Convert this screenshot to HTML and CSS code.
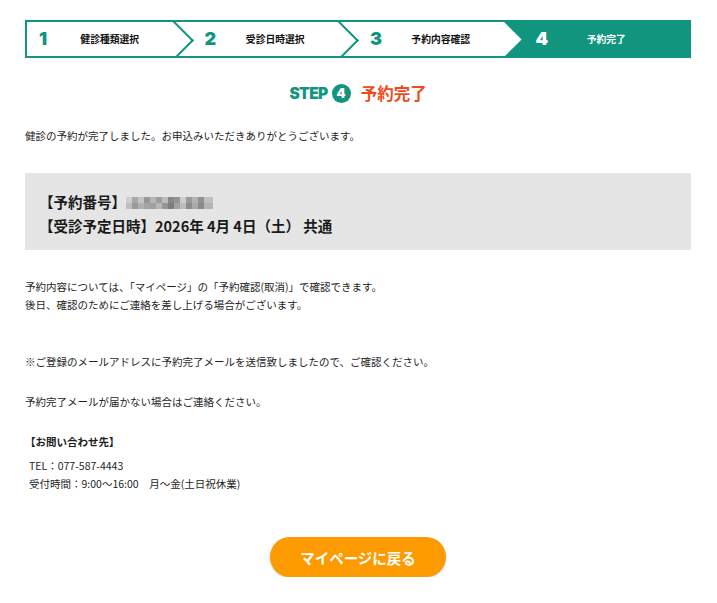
FILE: index.html
```html
<!DOCTYPE html>
<html lang="ja">
<head>
<meta charset="utf-8">
<title>予約完了</title>
<link rel="stylesheet" href="styles.css">
</head>
<body>
<div class="page">
  <ol class="steps">
    <li class="step"><span class="num">1</span><span class="label">健診種類選択</span></li>
    <li class="step"><span class="num">2</span><span class="label">受診日時選択</span></li>
    <li class="step before-current"><span class="num">3</span><span class="label">予約内容確認</span></li>
    <li class="step current"><span class="num">4</span><span class="label">予約完了</span></li>
  </ol>

  <h1 class="title"><span class="step-word">STEP</span><span class="step-badge">4</span><span class="title-text">予約完了</span></h1>

  <p class="lead">健診の予約が完了しました。お申込みいただきありがとうございます。</p>

  <div class="summary">
    <p>【予約番号】<span class="masked"></span></p>
    <p>【受診予定日時】2026年 4月 4日（土） 共通</p>
  </div>

  <p class="note first">予約内容については、「マイページ」の「予約確認(取消)」で確認できます。<br>後日、確認のためにご連絡を差し上げる場合がございます。</p>
  <p class="note mail">※ご登録のメールアドレスに予約完了メールを送信致しましたので、ご確認ください。</p>
  <p class="note">予約完了メールが届かない場合はご連絡ください。</p>

  <div class="contact">
    <p class="contact-title">【お問い合わせ先】</p>
    <p class="contact-line">TEL：077-587-4443</p>
    <p class="contact-line">受付時間：9:00〜16:00　月〜金(土日祝休業)</p>
  </div>

  <div class="actions"><a class="btn" href="#">マイページに戻る</a></div>
</div>
</body>
</html>
```

FILE: styles.css
```css
* { box-sizing: border-box; }

body {
  margin: 0;
  background: #fff;
  color: #1e1e1e;
  font-family: "Noto Sans CJK JP", "Noto Sans", sans-serif;
}

p { margin: 0; }

.page {
  width: 666px;
  margin: 0 auto 0 25px;
  padding-top: 20px;
}

/* step bar */
.steps {
  display: flex;
  list-style: none;
  margin: 0;
  padding: 0;
  height: 38px;
  border: 2px solid #11957f;
  overflow: hidden;
  position: relative;
}

.step {
  flex: 1;
  position: relative;
  display: grid;
  grid-template-columns: 1fr auto 1fr;
  align-items: center;
}

.step .num {
  grid-column: 1;
  justify-self: start;
  padding-left: 12px;
  font-family: Inter, "Open Sans", sans-serif;
  font-weight: 900;
  font-size: 18px;
  line-height: 1;
  color: #11957f;
}

.step .label {
  grid-column: 2;
  font-size: 9.8px;
  font-weight: 700;
  color: #111;
  white-space: nowrap;
}

.step::after {
  content: "";
  position: absolute;
  top: 50%;
  right: 5px;
  width: 27px;
  height: 27px;
  margin-top: -13.5px;
  border-top: 2px solid #11957f;
  border-right: 2px solid #11957f;
  transform: rotate(45deg);
  z-index: 2;
}

.step.before-current::after {
  border: 0;
  background: #fff;
  right: 8px;
}

.step.current {
  background: #11957f;
}

.step.current::before {
  content: "";
  position: absolute;
  top: 0;
  bottom: 0;
  left: -20px;
  width: 20px;
  background: #11957f;
  z-index: 1;
}

.step.current::after { content: none; }

.step.current .num,
.step.current .label { color: #fff; }

/* title */
.title {
  margin: 23px 0 0;
  height: 24px;
  display: flex;
  justify-content: center;
  align-items: center;
  font-weight: 700;
}

.step-word {
  font-family: Inter, "Open Sans", sans-serif;
  font-weight: 900;
  font-size: 15.5px;
  letter-spacing: -0.6px;
  color: #11957f;
}

.step-badge {
  width: 19px;
  height: 19px;
  margin-left: 4px;
  border-radius: 50%;
  background: #11957f;
  color: #fff;
  font-family: Inter, "Open Sans", sans-serif;
  font-weight: 900;
  font-size: 13px;
  line-height: 19px;
  text-align: center;
}

.title-text {
  margin-left: 10px;
  font-size: 16.5px;
  font-weight: 700;
  color: #ee4d1b;
}

/* body text */
.lead,
.note {
  font-size: 10.5px;
  line-height: 18px;
}

.lead { margin-top: 22px; }

.summary {
  margin-top: 28px;
  background: #e5e5e5;
  padding: 17px 14px 13px;
  font-size: 14.5px;
  font-weight: 700;
  line-height: 23.5px;
  color: #1a1a1a;
}

.masked {
  display: inline-block;
  vertical-align: -1px;
  width: 87px;
  height: 12px;
  background-image:
    linear-gradient(90deg, #cfcfcf 0 6px, #a8a8a8 6px 12px, #c4c4c4 12px 18px, #979797 18px 24px, #b6b6b6 24px 30px, #9e9e9e 30px 36px, #bdbdbd 36px 42px, #878787 42px 48px, #959595 48px 54px, #cdcdcd 54px 60px, #9a9a9a 60px 66px, #b3b3b3 66px 72px, #919191 72px 78px, #c0c0c0 78px 87px),
    linear-gradient(90deg, #bebebe 0 6px, #9b9b9b 6px 12px, #b0b0b0 12px 18px, #a4a4a4 18px 24px, #a0a0a0 24px 30px, #b7b7b7 30px 36px, #969696 36px 42px, #7d7d7d 42px 48px, #a3a3a3 48px 54px, #bcbcbc 54px 60px, #8d8d8d 60px 66px, #a9a9a9 66px 72px, #8a8a8a 72px 78px, #b4b4b4 78px 87px);
  background-size: 100% 6px, 100% 6px;
  background-position: 0 0, 0 6px;
  background-repeat: no-repeat;
}

.note.first { margin-top: 28px; }
.note.mail { margin-top: 39px; }
.note + .note:not(.mail) { margin-top: 22px; }

.contact {
  margin-top: 22px;
  font-size: 10.5px;
}

.contact-title {
  font-weight: 700;
  line-height: 18px;
  margin-bottom: 6px;
}

.contact-line {
  padding-left: 4px;
  line-height: 18px;
}

.actions {
  margin-top: 44px;
  display: flex;
  justify-content: center;
}

.btn {
  display: flex;
  align-items: center;
  justify-content: center;
  width: 176px;
  height: 40px;
  border-radius: 20px;
  background: #fd9a00;
  box-shadow: 0 1px 2px rgba(0, 0, 0, 0.18);
  color: #fff;
  font-size: 14.5px;
  font-weight: 700;
  text-decoration: none;
}
```
